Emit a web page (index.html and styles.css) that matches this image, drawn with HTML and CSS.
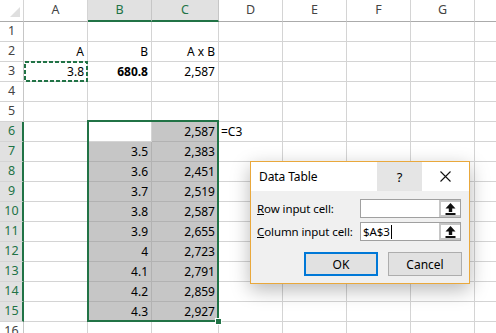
FILE: index.html
```html
<!DOCTYPE html>
<html lang="en">
<head>
    <meta charset="UTF-8">
    <title>Data Table</title>
    <link rel="stylesheet" href="styles.css">
</head>
<body>
    <div class="sheet">
        <div class="c corner"><span class="tri"></span></div>
        <div class="c colhead">A</div>
        <div class="c colhead sel">B</div>
        <div class="c colhead sel">C</div>
        <div class="c colhead">D</div>
        <div class="c colhead">E</div>
        <div class="c colhead">F</div>
        <div class="c colhead">G</div>
        <div class="c colhead"></div>

        <div class="c rowhead">1</div><div class="c"></div><div class="c"></div><div class="c"></div><div class="c"></div><div class="c"></div><div class="c"></div><div class="c"></div><div class="c"></div>
        <div class="c rowhead">2</div><div class="c num">A</div><div class="c num">B</div><div class="c num">A x B</div><div class="c"></div><div class="c"></div><div class="c"></div><div class="c"></div><div class="c"></div>
        <div class="c rowhead">3</div><div class="c num">3.8</div><div class="c num bold">680.8</div><div class="c num">2,587</div><div class="c"></div><div class="c"></div><div class="c"></div><div class="c"></div><div class="c"></div>
        <div class="c rowhead">4</div><div class="c"></div><div class="c"></div><div class="c"></div><div class="c"></div><div class="c"></div><div class="c"></div><div class="c"></div><div class="c"></div>
        <div class="c rowhead">5</div><div class="c"></div><div class="c"></div><div class="c"></div><div class="c"></div><div class="c"></div><div class="c"></div><div class="c"></div><div class="c"></div>
        <div class="c rowhead sel">6</div><div class="c"></div><div class="c"></div><div class="c num hl">2,587</div><div class="c txt">=C3</div><div class="c"></div><div class="c"></div><div class="c"></div><div class="c"></div>
        <div class="c rowhead sel">7</div><div class="c"></div><div class="c num hl">3.5</div><div class="c num hl">2,383</div><div class="c"></div><div class="c"></div><div class="c"></div><div class="c"></div><div class="c"></div>
        <div class="c rowhead sel">8</div><div class="c"></div><div class="c num hl">3.6</div><div class="c num hl">2,451</div><div class="c"></div><div class="c"></div><div class="c"></div><div class="c"></div><div class="c"></div>
        <div class="c rowhead sel">9</div><div class="c"></div><div class="c num hl">3.7</div><div class="c num hl">2,519</div><div class="c"></div><div class="c"></div><div class="c"></div><div class="c"></div><div class="c"></div>
        <div class="c rowhead sel">10</div><div class="c"></div><div class="c num hl">3.8</div><div class="c num hl">2,587</div><div class="c"></div><div class="c"></div><div class="c"></div><div class="c"></div><div class="c"></div>
        <div class="c rowhead sel">11</div><div class="c"></div><div class="c num hl">3.9</div><div class="c num hl">2,655</div><div class="c"></div><div class="c"></div><div class="c"></div><div class="c"></div><div class="c"></div>
        <div class="c rowhead sel">12</div><div class="c"></div><div class="c num hl">4</div><div class="c num hl">2,723</div><div class="c"></div><div class="c"></div><div class="c"></div><div class="c"></div><div class="c"></div>
        <div class="c rowhead sel">13</div><div class="c"></div><div class="c num hl">4.1</div><div class="c num hl">2,791</div><div class="c"></div><div class="c"></div><div class="c"></div><div class="c"></div><div class="c"></div>
        <div class="c rowhead sel">14</div><div class="c"></div><div class="c num hl">4.2</div><div class="c num hl">2,859</div><div class="c"></div><div class="c"></div><div class="c"></div><div class="c"></div><div class="c"></div>
        <div class="c rowhead sel">15</div><div class="c"></div><div class="c num hl">4.3</div><div class="c num hl">2,927</div><div class="c"></div><div class="c"></div><div class="c"></div><div class="c"></div><div class="c"></div>
        <div class="c rowhead">16</div><div class="c"></div><div class="c"></div><div class="c"></div><div class="c"></div><div class="c"></div><div class="c"></div><div class="c"></div><div class="c"></div>
    </div>

    <!-- copy marquee around A3 -->
    <svg class="ants" width="64" height="21" viewBox="0 0 64 21">
        <rect x="1" y="1" width="62" height="19" fill="none" stroke="#217346" stroke-width="2" stroke-dasharray="4 2"/>
    </svg>

    <!-- selection B6:C15 -->
    <div class="selection"><span class="handle"></span></div>

    <div class="dialog">
        <div class="titlebar">
            <span class="title">Data Table</span>
            <span class="tbtn help">?</span>
            <span class="tbtn close">
                <svg width="11" height="11" viewBox="0 0 11 11"><path d="M0.5 0.5 L10.5 10.5 M10.5 0.5 L0.5 10.5" stroke="#111" stroke-width="1.1"/></svg>
            </span>
        </div>
        <div class="dbody">
            <div class="field">
                <label><u>R</u>ow input cell:</label>
                <div class="refbox">
                    <span class="input"></span>
                    <span class="pick">
                        <svg width="11" height="12" viewBox="0 0 11 12"><path d="M5.5 0 L10.5 5.5 L7.2 5.5 L7.2 9 L3.8 9 L3.8 5.5 L0.5 5.5 Z M0.5 10 L10.5 10 L10.5 12 L0.5 12 Z" fill="#111"/></svg>
                    </span>
                </div>
            </div>
            <div class="field">
                <label><u>C</u>olumn input cell:</label>
                <div class="refbox">
                    <span class="input">$A$3<span class="caret"></span></span>
                    <span class="pick">
                        <svg width="11" height="12" viewBox="0 0 11 12"><path d="M5.5 0 L10.5 5.5 L7.2 5.5 L7.2 9 L3.8 9 L3.8 5.5 L0.5 5.5 Z M0.5 10 L10.5 10 L10.5 12 L0.5 12 Z" fill="#111"/></svg>
                    </span>
                </div>
            </div>
            <div class="buttons">
                <button class="btn default">OK</button>
                <button class="btn">Cancel</button>
            </div>
        </div>
    </div>
</body>
</html>
```

FILE: styles.css
```css
body {
    margin: 0;
    background: #fff;
    font-family: "Noto Sans", sans-serif;
    overflow: hidden;
    position: relative;
    width: 496px;
    height: 333px;
}

/* worksheet grid */
.sheet {
    display: grid;
    grid-template-columns: 24px 64px 64px 67px 64px 64px 64px 64px 64px;
    grid-template-rows: 22px repeat(16, 20px);
    font-size: 12px;
    color: #000;
}
.c {
    box-sizing: border-box;
    border-right: 1px solid #d4d4d4;
    border-bottom: 1px solid #d4d4d4;
    line-height: 18px;
    white-space: nowrap;
    overflow: hidden;
}
.corner {
    position: relative;
    border-bottom-color: #ababab;
}
.tri {
    position: absolute;
    right: 3px;
    bottom: 4px;
    width: 0;
    height: 0;
    border-left: 10px solid transparent;
    border-bottom: 10px solid #dfdfdf;
}
.colhead {
    text-align: center;
    color: #444;
    line-height: 20px;
    border-bottom-color: #ababab;
    font-size: 12.5px;
}
.colhead.sel {
    background: #e1e1e1;
    color: #217346;
    border-bottom: 2px solid #217346;
    border-right-color: #c6c6c6;
}
.rowhead {
    text-align: center;
    color: #444;
    font-size: 12.5px;
    border-right-color: #c6c6c6;
}
.rowhead.sel {
    background: #e1e1e1;
    color: #217346;
    border-right: 2px solid #217346;
    padding-left: 1px;
}
.num {
    text-align: right;
    padding-right: 3px;
    line-height: 19px;
}
.txt {
    padding-left: 2px;
    line-height: 19px;
}
.bold {
    font-weight: bold;
}
.hl {
    background: #c6c6c6;
    border-right-color: #b2b2b2;
    border-bottom-color: #b2b2b2;
}

/* overlays */
.ants {
    position: absolute;
    left: 24px;
    top: 61px;
}
.selection {
    position: absolute;
    left: 87px;
    top: 120px;
    width: 132px;
    height: 202px;
    box-sizing: border-box;
    border: 2px solid #217346;
}
.handle {
    position: absolute;
    right: -5px;
    bottom: -5px;
    width: 5px;
    height: 5px;
    background: #217346;
    border: 1px solid #fff;
}

/* dialog */
.dialog {
    position: absolute;
    left: 250px;
    top: 161px;
    width: 220px;
    height: 123px;
    box-sizing: border-box;
    border: 1px solid #e9a83c;
    background: #f0f0f0;
    box-shadow: 0 6px 18px rgba(0, 0, 0, 0.28);
    font-size: 11.5px;
    letter-spacing: -0.1px;
    color: #000;
    display: flex;
    flex-direction: column;
}
.titlebar {
    height: 29px;
    background: #fff;
    display: flex;
    align-items: stretch;
}
.title {
    flex: 1;
    padding-left: 8px;
    line-height: 29px;
    font-size: 12px;
}
.tbtn {
    width: 45px;
    display: flex;
    align-items: center;
    justify-content: center;
}
.tbtn.close {
    width: 47px;
}
.help {
    background: #e5e5e5;
    font-size: 13px;
}
.dbody {
    padding: 8px 7px 0 6px;
    display: flex;
    flex-direction: column;
    gap: 4px;
}
.field {
    display: flex;
    align-items: center;
}
.field label {
    width: 103px;
}
.refbox {
    display: flex;
    width: 101px;
    height: 19px;
    box-sizing: border-box;
    border: 1px solid #a0a0a0;
    background: #fff;
}
.input {
    flex: 1;
    padding-left: 2px;
    line-height: 17px;
    display: flex;
    align-items: center;
}
.caret {
    display: inline-block;
    width: 1px;
    height: 14px;
    background: #000;
    margin-left: 1px;
}
.pick {
    width: 21px;
    box-sizing: border-box;
    border: 2px solid #c6c6c6;
    border-right: none;
    display: flex;
    align-items: center;
    justify-content: center;
}
.buttons {
    display: flex;
    justify-content: flex-end;
    gap: 10px;
    margin-top: 7px;
}
.btn {
    width: 74px;
    height: 24px;
    border: 1px solid #adadad;
    background: #e1e1e1;
    font-family: "Noto Sans", sans-serif;
    font-size: 12px;
    padding: 0;
    color: #000;
}
.btn.default {
    border: 2px solid #0078d7;
}
```
